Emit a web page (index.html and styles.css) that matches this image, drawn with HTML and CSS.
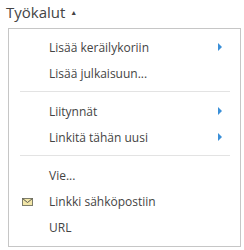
FILE: index.html
```html
<!DOCTYPE html>
<html lang="fi">
<head>
  <meta charset="UTF-8">
  <title>Työkalut</title>
  <link rel="stylesheet" href="styles.css">
</head>
<body>
  <div class="tools">
    <div class="tools-title">Työkalut <span class="caret">&#9650;</span></div>
    <div class="menu">
      <div class="item"><span class="label">Lisää keräilykoriin</span><span class="sub"></span></div>
      <div class="item"><span class="label">Lisää julkaisuun...</span></div>
      <div class="sep"></div>
      <div class="item"><span class="label">Liitynnät</span><span class="sub"></span></div>
      <div class="item"><span class="label">Linkitä tähän uusi</span><span class="sub"></span></div>
      <div class="sep"></div>
      <div class="item"><span class="label">Vie...</span></div>
      <div class="item">
        <svg class="icon" width="11" height="8" viewBox="0 0 11 8">
          <rect x="0.5" y="0.5" width="10" height="7" fill="#f2e6a8" stroke="#7d7d6a"/>
          <path d="M0.5 0.5 L5.5 4.5 L10.5 0.5" fill="none" stroke="#5a5a50"/>
        </svg>
        <span class="label">Linkki sähköpostiin</span>
      </div>
      <div class="item"><span class="label">URL</span></div>
    </div>
  </div>
</body>
</html>
```

FILE: styles.css
```css
body {
  margin: 0;
  font-family: "Open Sans", "Noto Sans", sans-serif;
  background-color: #ffffff;
  color: #444;
}

.tools {
  padding: 2px 0 0 6px;
}

.tools-title {
  font-size: 15px;
  color: #444;
  height: 26px;
  line-height: 20px;
}

.caret {
  font-size: 7px;
  vertical-align: 3px;
  margin-left: 1px;
}

.menu {
  margin-left: 2px;
  width: 231px;
  border: 1px solid #c6c6c6;
  padding: 5px 0 6px 0;
}

.item {
  position: relative;
  display: flex;
  align-items: center;
  height: 26px;
  padding-left: 40px;
  font-size: 12px;
  color: #444;
}

.icon {
  position: absolute;
  left: 13px;
  top: 10px;
}

.sub {
  margin-left: auto;
  margin-right: 18px;
  width: 0;
  height: 0;
  border-top: 4px solid transparent;
  border-bottom: 4px solid transparent;
  border-left: 4px solid #3a8fd8;
}

.sep {
  height: 1px;
  background-color: #e3e3e3;
  margin: 5px 10px 6px 11px;
}
```
